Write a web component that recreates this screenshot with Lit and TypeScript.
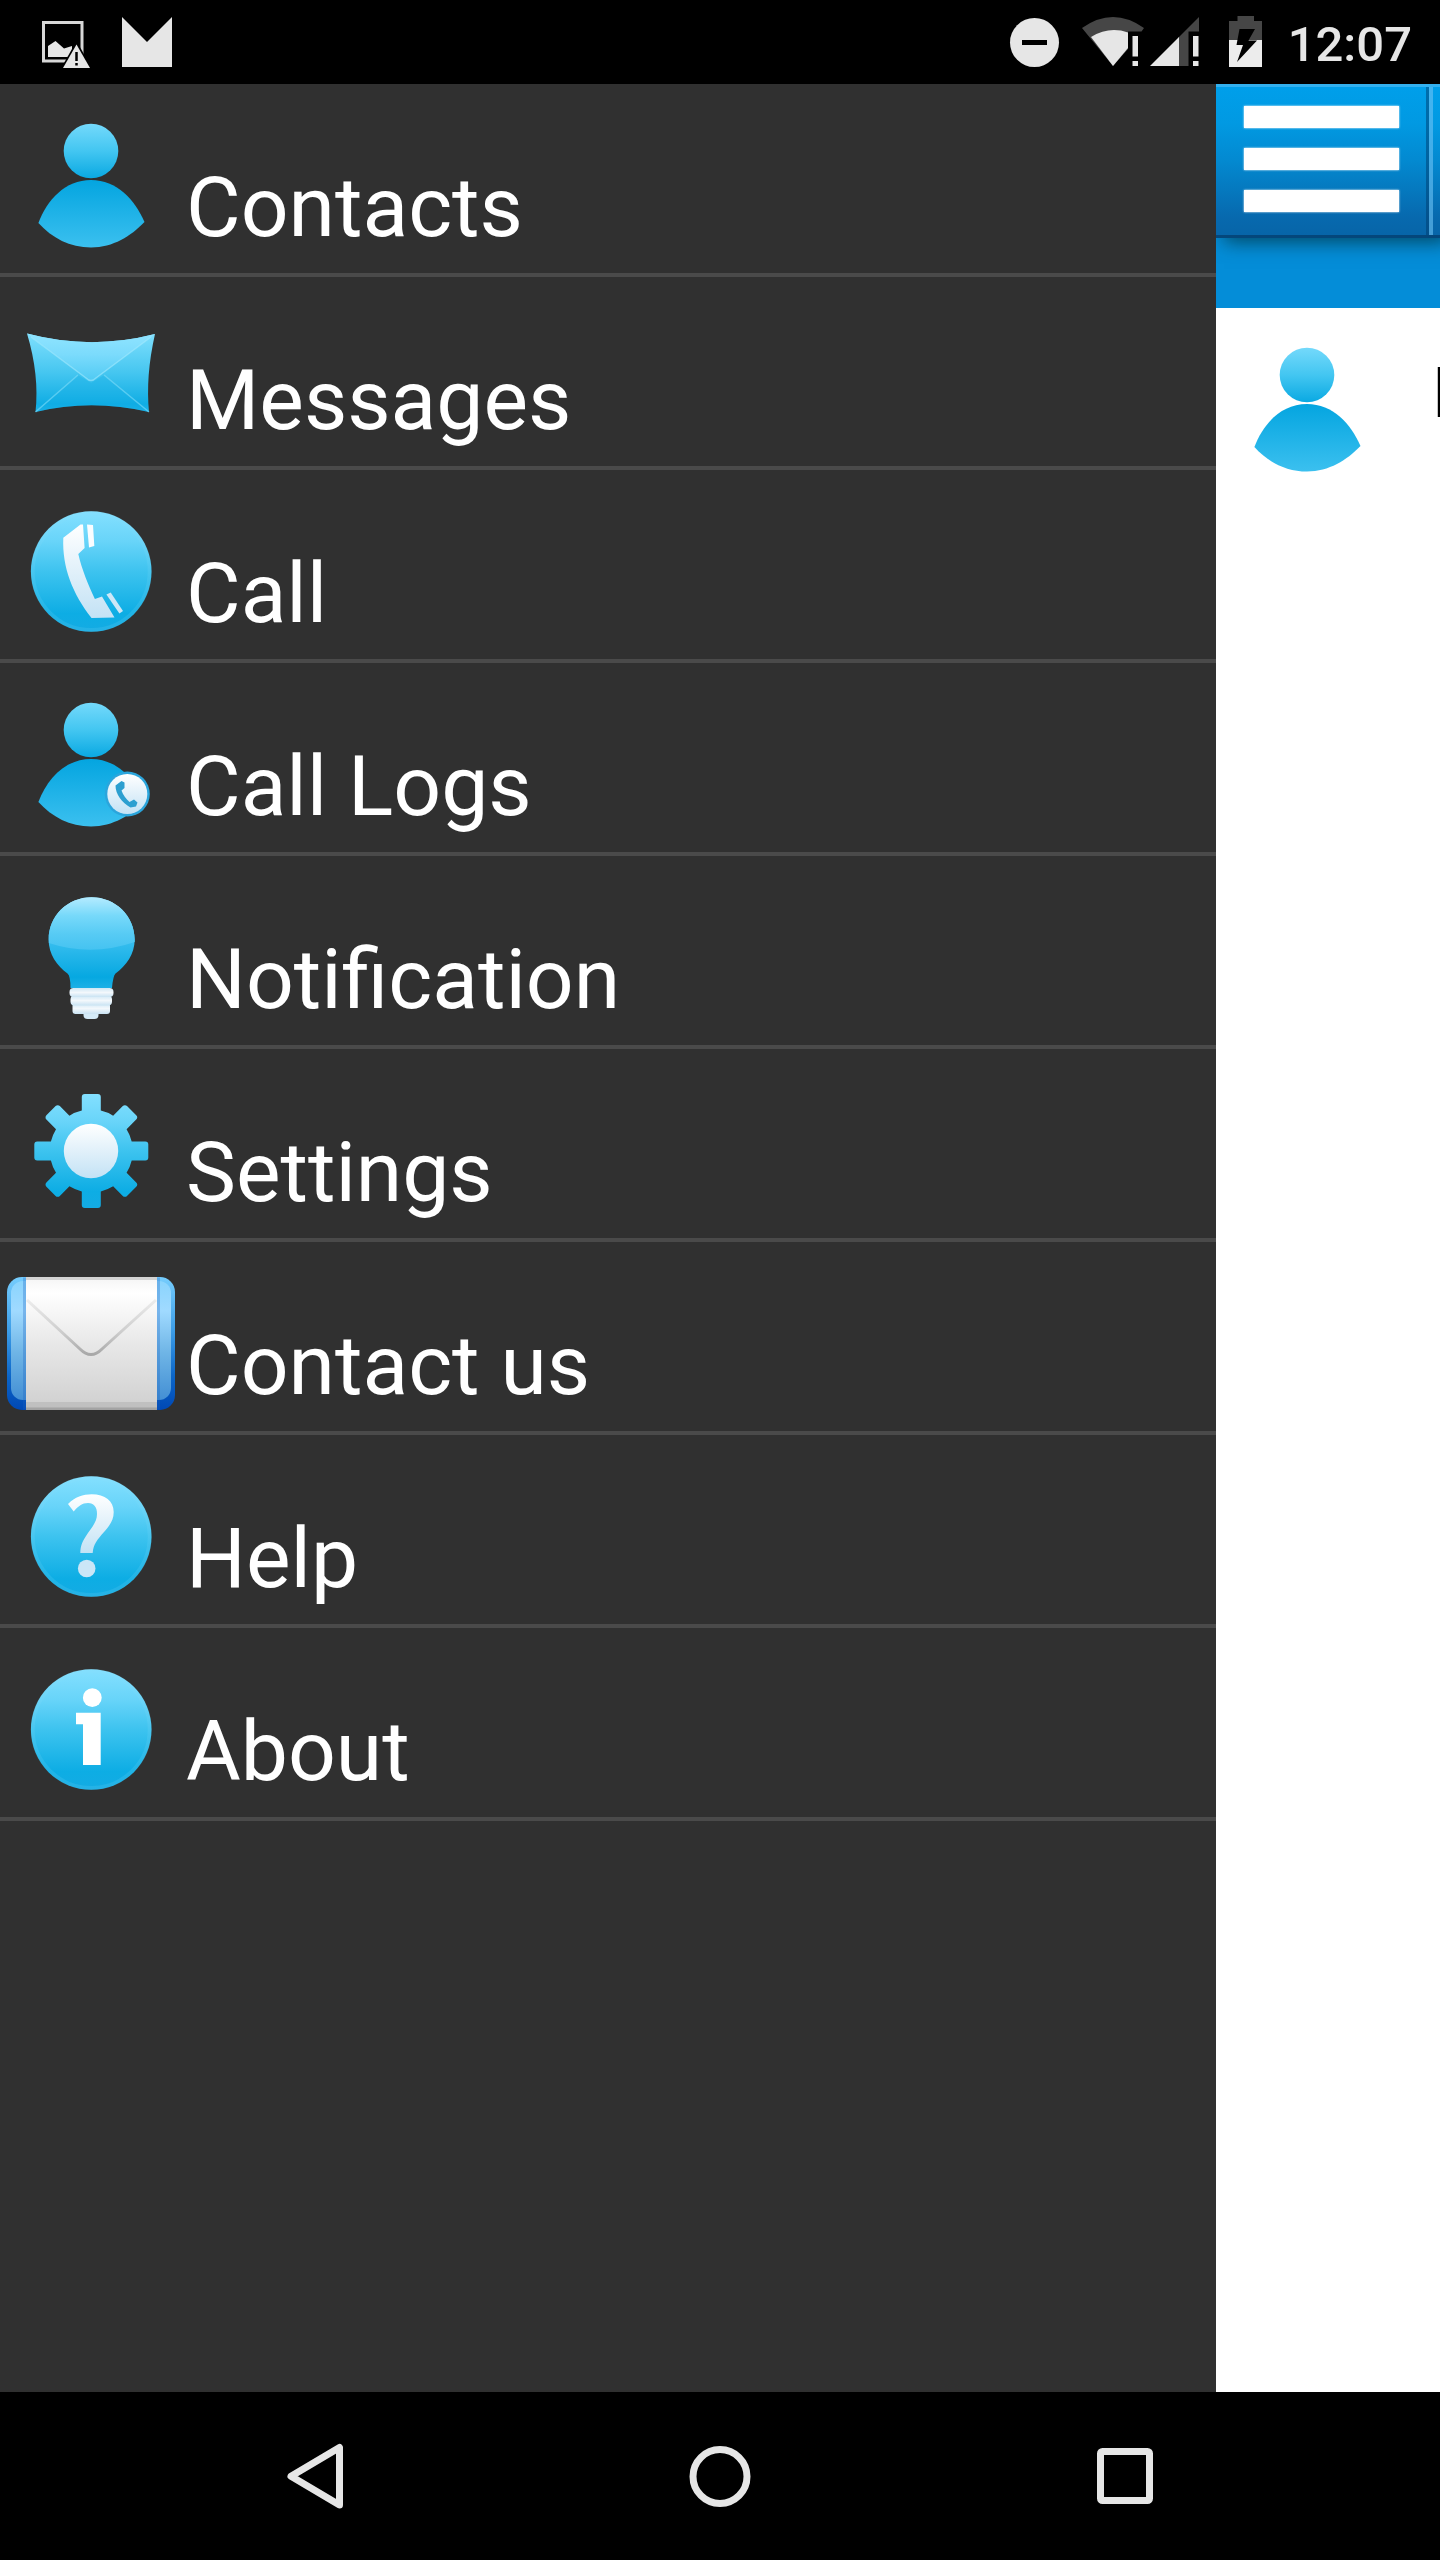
import { LitElement, html, css, svg } from "lit";
import { customElement } from "lit/decorators.js";

const person = svg`
  <circle cx="84" cy="35" r="27.3" fill="url(#head)" />
  <path d="M31.400 107C40 84 58 64 84 64C110 64 128 84 137.500 106C124 120 106 131.500 84 131.500C63 131.500 45 122 31.400 107Z" fill="url(#body)" />`;

const disc = svg`
  <circle cx="84.200" cy="69.500" r="60.300" fill="url(#disc)" />
  <circle cx="84.200" cy="69.500" r="58.500" fill="none" stroke="#8edcfa" stroke-opacity=".15" stroke-width="4" />`;

const icons = {
  contacts: person,
  messages: svg`
    <path d="M20 24.500Q84 41.500 148 25Q138.500 67 142 103Q84 89.500 28.500 103Q32.500 66 20 24.500Z" fill="url(#env)" />
    <path d="M28.500 103L71 66L84 74L97 66L142 103Q84 89.500 28.500 103Z" fill="#12ade6" fill-opacity=".3" />
    <path d="M28.500 103L71 66M142 103L97 66" stroke="#7fdcf8" stroke-opacity=".6" stroke-width="1.500" fill="none" />
    <path d="M20 24.500Q84 41.500 148 25L89 69Q84 74 79 69Z" fill="url(#flap)" />
    <path d="M24 28L79 69Q84 74 89 69L144 28" stroke="#a4eafd" stroke-opacity=".6" stroke-width="1.500" fill="none" />`,
  call: svg`${disc}
    <path d="M56.300 35.700L73.500 22.500L76 22.500L77.600 46L71.300 52C75 68 81 82 87.900 97L95 94.500L107.500 115.500L84.500 116C66 92 55 66 56.300 35.700Z" fill="url(#white)" />
    <path d="M80 22.500L86 23L87.300 44L82 45.500Z" fill="#fafdff" />
    <path d="M99.400 92.500L103.700 90.500L116 109L112.400 111.500Z" fill="#cde7f7" />`,
  logs: svg`${person}
    <circle cx="120.300" cy="99" r="22.500" fill="#2ba5dc" />
    <circle cx="120.300" cy="99" r="20" fill="url(#white)" />
    <path d="M108.500 90.500L114.500 86L117.500 87.500L117.500 93L114.500 95.500C116 100 119 104 122.500 107L127 104.500L130.500 107.500L129 111.500L123.500 112.500C115 108 108.500 99 108.500 90.500Z" fill="#2d9fd0" />`,
  bulb: svg`
    <path d="M84.500 9.300C108.500 9.300 127.700 28 127.700 51.500C127.700 66 119 78 108.500 85.500Q106 88 105 100H63.500Q63.500 88 60.500 85.500C50 78 41.600 66 41.600 51.500C41.600 28 60.500 9.300 84.500 9.300Z" fill="url(#bulb)" />
    <path d="M84.500 9.300C108.500 9.300 127.700 28 127.700 51.500V54Q84.500 69 41.800 55V51.500C41.600 28 60.500 9.300 84.500 9.300Z" fill="url(#shine)" />
    <rect x="76.500" y="122" width="15" height="9" rx="4" fill="#d5ebf8" />
    <rect x="65.500" y="115" width="37.500" height="11" rx="3" fill="url(#screw)" />
    <rect x="63.500" y="107.500" width="41.500" height="10" rx="4" fill="url(#screw)" />
    <rect x="62.500" y="100" width="44" height="9" rx="4" fill="url(#screw)" />`,
  gear: svg`
    <clipPath id="gearShape">
      <circle cx="84.300" cy="70" r="41.500" />
      ${[0, 45, 90, 135, 180, 225, 270, 315].map(
        (a) => svg`<rect x="74.800" y="13" width="19" height="28" rx="3" transform="rotate(${a} 84.300 70)" />`,
      )}
    </clipPath>
    <rect x="26" y="12" width="117" height="116" fill="url(#disc)" clip-path="url(#gearShape)" />
    <circle cx="84" cy="70" r="27.200" fill="url(#white)" />`,
  letter: svg`
    <rect y="3" width="168" height="133" rx="15" fill="url(#blueBox)" />
    <rect x="4" y="7" width="160" height="119" rx="12" fill="url(#blueGloss)" />
    <path d="M17.500 3.500V135.500M151.500 3.500V135.500" stroke="#1a5fc0" stroke-opacity=".3" stroke-width="3" />
    <rect x="19" y="3" width="131" height="133" fill="url(#paper)" />
    <path d="M19 3H150V6H19Z" fill="#bdbdbd" fill-opacity=".6" />
    <path d="M19 128H150V136H19Z" fill="#999" fill-opacity=".3" />
    <path d="M19 133.500H150V136H19Z" fill="#888" fill-opacity=".5" />
    <path d="M20 26L73 75Q84 86 95 75L149 26" fill="none" stroke="url(#fold)" stroke-width="3" />`,
  help: svg`${disc}
    <path d="M61 37C68 30 76 27.300 84.700 27.300C98 27.300 106.700 34 106.700 45C106.700 53 103 58 97 65C90 73 86.500 77 85.700 86H73.300C73.500 79 75 75 79 69C85 60 90 55 90 47C90 40 87 36 81 36C75 36 71.500 39 66.700 44.500Z" fill="url(#white)" />
    <circle cx="79.700" cy="101.500" r="8.800" fill="#cbe6f7" />`,
  info: svg`${disc}
    <circle cx="85.300" cy="37.700" r="9.400" fill="#fff" />
    <path d="M69 52.700H93.700V105H76V64.300H69Z" fill="#fff" />`,
};

const menu = [
  { label: "Contacts", icon: icons.contacts },
  { label: "Messages", icon: icons.messages },
  { label: "Call", icon: icons.call },
  { label: "Call Logs", icon: icons.logs },
  { label: "Notification", icon: icons.bulb },
  { label: "Settings", icon: icons.gear },
  { label: "Contact us", icon: icons.letter },
  { label: "Help", icon: icons.help },
  { label: "About", icon: icons.info },
];

@customElement("app-root")
export class AppRoot extends LitElement {
  static styles = css`
    :host {
      display: flex;
      flex-direction: column;
      min-height: 100vh;
      background: #000;
      color: #fff;
      font-family: Roboto, "Liberation Sans", sans-serif;
    }
    svg {
      display: block;
      flex: none;
      overflow: visible;
    }
    button {
      border: 0;
      padding: 0;
      background: none;
      cursor: pointer;
    }
    .defs {
      width: 0;
      height: 0;
    }
    .status {
      display: flex;
      align-items: center;
      justify-content: space-between;
      height: 84px;
      padding: 0 28px 0 40px;
      color: #e6e6e6;
    }
    .group {
      display: flex;
      align-items: center;
      gap: 24px;
    }
    .alerts {
      gap: 30px;
    }
    .radios {
      gap: 6px;
    }
    .time {
      padding-top: 6px;
      font-size: 49px;
      line-height: 58px;
      font-weight: 500;
    }
    .main {
      flex: 1;
      display: grid;
      grid-template-columns: minmax(0, 1fr) 224px;
    }
    .drawer {
      background: #303030;
    }
    .menu {
      list-style: none;
      margin: 0;
      padding: 0;
    }
    .item {
      display: flex;
      align-items: flex-end;
      gap: 11px;
      padding: 32px 7px 17px;
      border-bottom: 4px solid #4a4a4a;
      color: #fff;
      text-decoration: none;
      font-size: 84px;
      line-height: 96px;
    }
    .content {
      overflow: hidden;
      background: #fff;
    }
    .band {
      height: 224px;
      background: #048dd8;
    }
    .toolbar {
      display: flex;
      height: 154px;
      box-sizing: border-box;
      border-top: 3px solid #34b0ee;
      border-bottom: 3px solid #04477b;
      background: linear-gradient(#009fea, #0199e2 25%, #0389d0 50%, #0769ae 88%, #0765a8);
      box-shadow: 8px 4px 18px rgba(0, 50, 60, 0.75);
    }
    .toggle {
      display: flex;
      flex-direction: column;
      gap: 20px;
      flex: none;
      width: 217px;
      box-sizing: border-box;
      padding: 19px 30px 0 28px;
      border-right: 4px solid rgba(110, 195, 245, 0.6);
      box-shadow: inset -3px 0 0 rgba(0, 60, 110, 0.5);
    }
    .bar {
      height: 22px;
      box-shadow: 0 0 2px #fff;
      background: #fff;
    }
    .person {
      display: flex;
      align-items: flex-start;
      gap: 41px;
      padding: 32px 7px 17px;
      color: #000;
      font-size: 70px;
      line-height: 82px;
    }
    .name {
      padding-top: 12px;
    }
    .keys {
      display: flex;
      height: 168px;
      padding: 0 112px;
    }
    .key {
      flex: 1;
      display: flex;
      align-items: center;
      justify-content: center;
    }
  `;

  private stop(offset: string, color: string) {
    return svg`<stop offset="${offset}" stop-color="${color}" />`;
  }

  private ramp(id: string, stops: [string, string][]) {
    return svg`<linearGradient id="${id}" x1="0" y1="0" x2="0" y2="1">
      ${stops.map(([o, c]) => this.stop(o, c))}
    </linearGradient>`;
  }

  private defs() {
    return html`<svg class="defs" aria-hidden="true"><defs>
      ${this.ramp("head", [["0", "#74d9fb"], ["0.5", "#43c6f1"], ["1", "#0aa9e2"]])}
      ${this.ramp("body", [["0", "#04a5e0"], ["1", "#3bc0ef"]])}
      ${this.ramp("disc", [["0", "#84e0ff"], ["0.25", "#68d4f9"], ["0.5", "#3dc3ef"], ["0.85", "#0dade4"], ["1", "#14abe3"]])}
      ${this.ramp("env", [["0", "#7fdffd"], ["0.5", "#45c6f0"], ["0.9", "#10ade4"], ["1", "#1fb3e8"]])}
      ${this.ramp("flap", [["0", "#90e4ff"], ["0.45", "#7bdbfc"], ["1", "#4fcaf3"]])}
      ${this.ramp("white", [["0", "#ffffff"], ["1", "#c3e2f5"]])}
      ${this.ramp("bulb", [["0", "#7fdcfa"], ["0.5", "#35bdee"], ["0.88", "#06a8e1"], ["1", "#1db0e6"]])}
      ${this.ramp("shine", [["0", "#b4ebff"], ["0.35", "#77d9fa"], ["0.7", "#57cbf4"], ["1", "#45c3f1"]])}
      ${this.ramp("screw", [["0", "#cfe7f5"], ["0.5", "#f3f8fc"], ["1", "#c9e3f3"]])}
      ${this.ramp("blueBox", [["0", "#76cdfd"], ["0.4", "#3d9ee8"], ["0.75", "#0b65c8"], ["1", "#0048b4"]])}
      ${this.ramp("blueGloss", [["0", "#8ad4fd"], ["0.25", "#a0daff"], ["0.6", "#6fb5e6"], ["1", "#438fd4"]])}
      ${this.ramp("paper", [["0", "#f4f4f4"], ["0.12", "#ffffff"], ["0.5", "#e8e8e8"], ["1", "#cfcfcf"]])}
      ${this.ramp("fold", [["0", "#ececec"], ["0.6", "#cccccc"], ["1", "#a8a8a8"]])}
    </defs></svg>`;
  }

  render() {
    return html`
      ${this.defs()}
      <header class="status">
        <div class="group alerts">
          <svg width="52" height="50" viewBox="0 0 52 50" aria-hidden="true">
            <path d="M3.500 5.500H42V44H3.500Z" fill="none" stroke="#d8d8d8" stroke-width="3" />
            <path d="M8 29L15.500 24L24 31.500L32 29V40H8Z" fill="#e6e6e6" />
            <path d="M36.500 24L20 53H53Z" fill="#000" />
            <path d="M36.500 27.500L50 51H23Z" fill="#e6e6e6" />
            <path d="M36.500 35V44M36.500 46V48.500" stroke="#000" stroke-width="2.500" />
          </svg>
          <svg width="50" height="50" viewBox="0 0 50 50" aria-hidden="true">
            <path d="M0 0L25 25L50 0V50H0Z" fill="#e6e6e6" />
          </svg>
        </div>
        <div class="group">
          <svg width="48" height="50" viewBox="0 0 48 50" aria-hidden="true">
            <circle cx="24.500" cy="25.500" r="24.500" fill="#e6e6e6" />
            <rect x="12" y="23" width="25" height="5" fill="#000" />
          </svg>
          <div class="group radios">
            <svg width="62" height="50" viewBox="0 0 62 50" aria-hidden="true">
              <path d="M0 11Q31 -11 62 11L59.500 14.500H46V32L31 49Z" fill="#464646" />
              <path d="M9 20Q27 9 46 15.500V31L31 49Z" fill="#e6e6e6" />
              <path d="M50.500 19H56V39.500H50.500ZM50.500 44H56V49H50.500Z" fill="#e6e6e6" />
            </svg>
            <svg width="50" height="50" viewBox="0 0 50 50" aria-hidden="true">
              <path d="M49 0V14.500H38.500V49H28V21Z" fill="#464646" />
              <path d="M0 49L29 20V49Z" fill="#e6e6e6" />
              <path d="M43 19H48.500V39.500H43ZM43 44H48.500V49H43Z" fill="#e6e6e6" />
            </svg>
          </div>
          <svg width="40" height="50" viewBox="0 0 40 50" aria-hidden="true">
            <path d="M5 4H13.500V-1H30V4H38V23H5Z" fill="#464646" />
            <path d="M5 23H38V50H5Z" fill="#ececec" />
            <path d="M15.500 12H31L24.500 23.500H33L13 45L19 28H12.500Z" fill="#000" />
          </svg>
          <time class="time">12:07</time>
        </div>
      </header>
      <main class="main">
        <nav class="drawer" aria-label="Main menu">
          <ul class="menu">
            ${menu.map(
              (m) => html`<li>
                <a class="item" href="#">
                  <svg width="168" height="140" viewBox="0 0 168 140" aria-hidden="true">${m.icon}</svg>
                  <span>${m.label}</span>
                </a>
              </li>`,
            )}
          </ul>
        </nav>
        <section class="content">
          <div class="band">
            <div class="toolbar">
              <button class="toggle" aria-label="Menu">
                <span class="bar"></span><span class="bar"></span><span class="bar"></span>
              </button>
            </div>
          </div>
          <div class="person">
            <svg width="168" height="140" viewBox="0 0 168 140" aria-hidden="true">${person}</svg>
            <span class="name">M</span>
          </div>
        </section>
      </main>
      <footer class="keys">
        <button class="key" aria-label="Back">
          <svg width="66" height="66" viewBox="0 0 66 66" aria-hidden="true">
            <path d="M57.500 4.500V62L9 33.300Z" fill="none" stroke="#e6e6e6" stroke-width="7" stroke-linejoin="round" />
          </svg>
        </button>
        <button class="key" aria-label="Home">
          <svg width="66" height="66" viewBox="0 0 66 66" aria-hidden="true">
            <circle cx="33" cy="33.500" r="27" fill="none" stroke="#e6e6e6" stroke-width="7" />
          </svg>
        </button>
        <button class="key" aria-label="Recent apps">
          <svg width="66" height="66" viewBox="0 0 66 66" aria-hidden="true">
            <rect x="8.500" y="8.500" width="49" height="49" rx="2" fill="none" stroke="#e6e6e6" stroke-width="7" />
          </svg>
        </button>
      </footer>
    `;
  }
}
